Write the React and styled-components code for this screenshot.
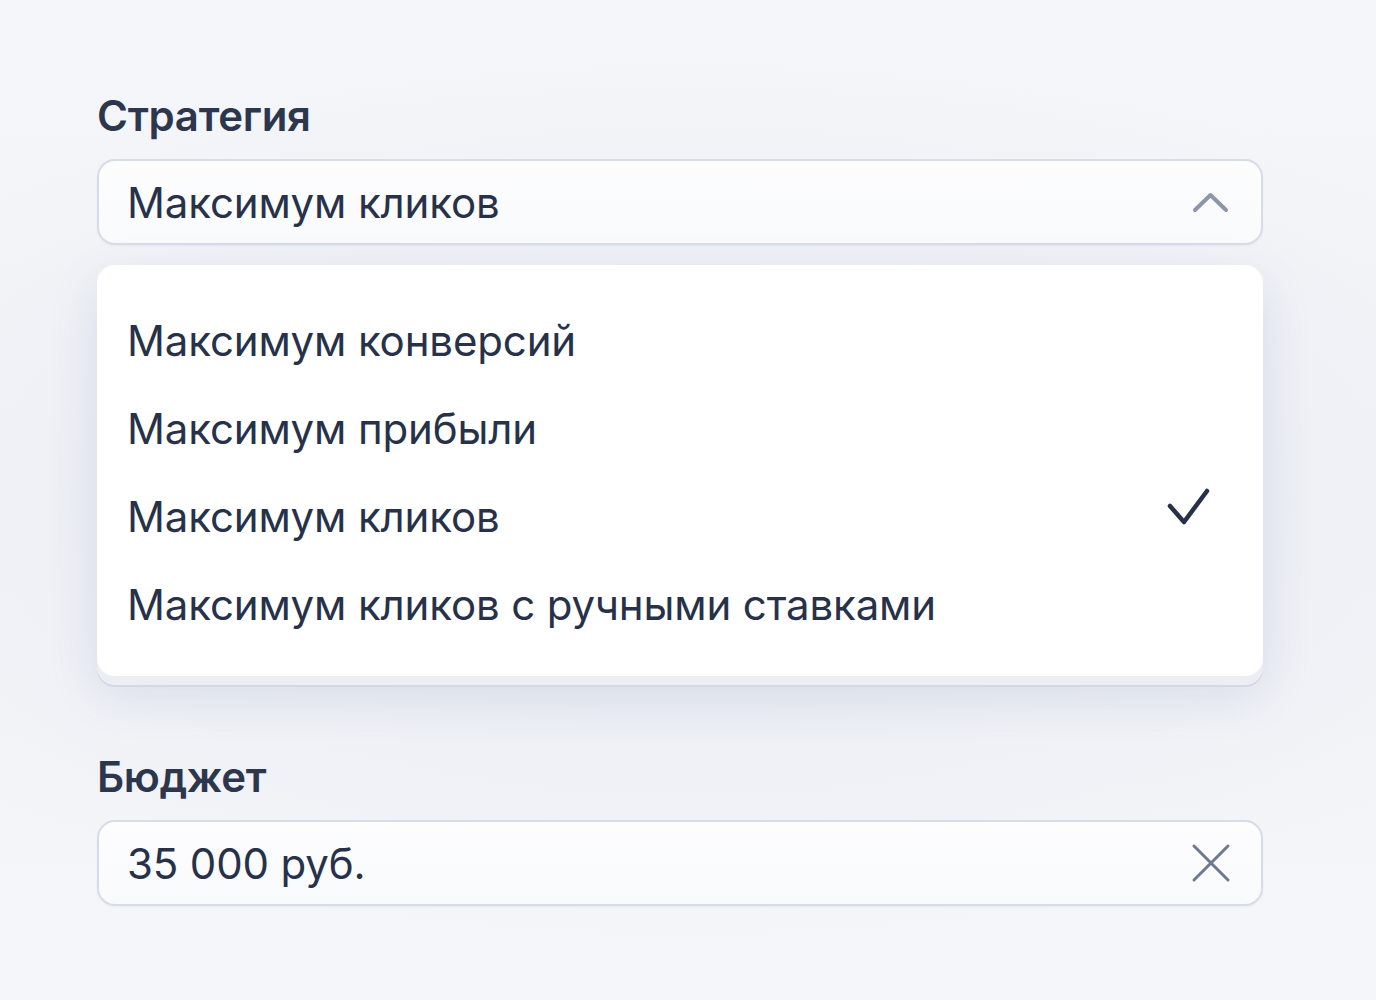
import React from "react";
import styled, { createGlobalStyle } from "styled-components";

const Global = createGlobalStyle`
  html, body { margin: 0; padding: 0; }
  body {
    font-family: Inter, "Liberation Sans", Arial, sans-serif;
    background: #f4f5f9;
  }
`;

const Page = styled.div`
  width: 1376px;
  height: 1000px;
  box-sizing: border-box;
  padding: 93px 113px 0 97px;
  background:
    radial-gradient(ellipse 70% 45% at 50% 50%, #e8ebf3 0%, rgba(232,235,243,0) 100%),
    linear-gradient(180deg, #f5f6f9 0%, #f1f3f7 50%, #f5f6f9 100%);
  display: flex;
  flex-direction: column;
`;

const Field = styled.div`
  display: flex;
  flex-direction: column;
  margin-bottom: ${(p) => p.$mb || 0}px;
`;

const Label = styled.div`
  font-size: 42px;
  font-weight: 600;
  color: #2c374d;
  line-height: 46px;
  margin-bottom: 20px;
  letter-spacing: -0.3px;
`;

const Box = styled.div`
  height: 86px;
  box-sizing: border-box;
  border: 2px solid #d7dce7;
  border-radius: 18px;
  background: linear-gradient(180deg, #fdfdfe 0%, #f9fafc 100%);
  display: flex;
  align-items: center;
  justify-content: space-between;
  padding: 0 30px 0 28px;
  box-shadow: 0 1px 2px rgba(40, 60, 100, 0.05);
`;

const Value = styled.span`
  font-size: 42px;
  color: #27324a;
  letter-spacing: -0.15px;
`;

const Panel = styled.div`
  margin-top: 20px;
  background: #ffffff;
  border-radius: 18px;
  padding: 31px 0 28px;
  display: flex;
  flex-direction: column;
  box-shadow:
    0 9px 0 #eceef4,
    0 11px 0 #d3d8e3,
    0 18px 50px rgba(70, 90, 140, 0.14);
`;

const Option = styled.div`
  height: 88px;
  display: flex;
  align-items: center;
  justify-content: space-between;
  padding: 0 52px 0 30px;
  font-size: 42px;
  color: #27324a;
  letter-spacing: -0.15px;
`;

const IconSvg = styled.svg`
  display: block;
  flex: none;
  margin-bottom: ${(p) => p.$lift || 0}px;
`;

const ChevronUp = () => (
  <IconSvg width="40" height="28" viewBox="0 0 40 28" fill="none">
    <path d="M4 22 L19.5 7 L35 22" stroke="#8c95aa" strokeWidth="4" strokeLinecap="round" strokeLinejoin="round" />
  </IconSvg>
);

const CheckMark = () => (
  <IconSvg $lift={18} width="46" height="40" viewBox="0 0 46 40" fill="none">
    <path d="M5 19 L19 35 L42 4" stroke="#27324a" strokeWidth="4.5" strokeLinecap="round" strokeLinejoin="round" />
  </IconSvg>
);

const Cross = () => (
  <IconSvg width="40" height="40" viewBox="0 0 40 40" fill="none">
    <path d="M3 3 L37 37 M37 3 L3 37" stroke="#6f7891" strokeWidth="3" strokeLinecap="round" />
  </IconSvg>
);

const options = [
  "Максимум конверсий",
  "Максимум прибыли",
  "Максимум кликов",
  "Максимум кликов с ручными ставками",
];

export default function App() {
  return (
    <>
      <Global />
      <Page>
        <Field $mb={78}>
          <Label>Стратегия</Label>
          <Box>
            <Value>Максимум кликов</Value>
            <ChevronUp />
          </Box>
          <Panel>
            {options.map((o) => (
              <Option key={o}>
                <span>{o}</span>
                {o === "Максимум кликов" && <CheckMark />}
              </Option>
            ))}
          </Panel>
        </Field>
        <Field>
          <Label>Бюджет</Label>
          <Box>
            <Value>35 000 руб.</Value>
            <Cross />
          </Box>
        </Field>
      </Page>
    </>
  );
}
